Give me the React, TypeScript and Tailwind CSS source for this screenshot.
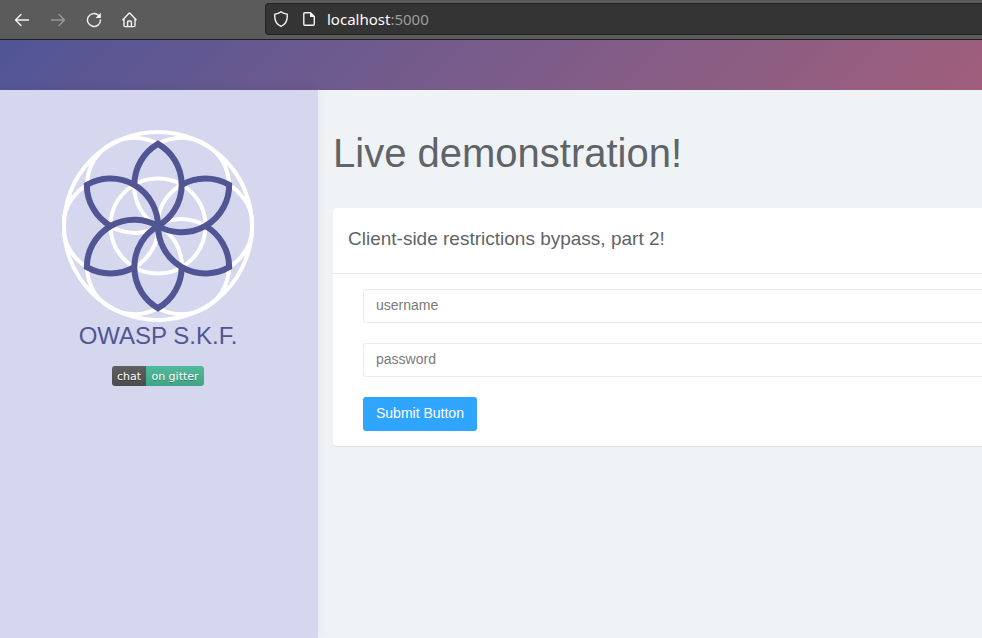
const petals = [0, 60, 120, 180, 240, 300];

function Logo() {
  return (
    <svg viewBox="-96 -96 192 192" className="block size-48" fill="none" role="img" aria-label="OWASP S.K.F. logo">
      <g stroke="#ffffff" strokeWidth="4">
        <circle r="94" />
        <circle r="47.5" />
        {petals.map((angle) => (
          <circle key={angle} cx="47" r="47.5" transform={`rotate(${angle})`} />
        ))}
      </g>
      <g stroke="#515594" strokeWidth="6" strokeLinejoin="miter">
        {petals.map((angle) => (
          <path
            key={angle}
            d="M-23.7 -41.1A47.5 47.5 0 0 1 0 -82.2A47.5 47.5 0 0 1 0 0"
            transform={`rotate(${angle})`}
          />
        ))}
      </g>
    </svg>
  );
}

function BrowserBar() {
  return (
    <div className="flex h-10 shrink-0 items-center border-b border-[#202020] bg-[#5b5b5b] text-[#f4f4f4]">
      <div className="flex w-[265px] shrink-0 items-center gap-5 pl-3.5">
        <button type="button" aria-label="Back">
          <svg viewBox="0 0 16 16" className="size-4" fill="none" stroke="currentColor" strokeWidth="1.4" strokeLinecap="round" strokeLinejoin="round">
            <path d="M14.5 8H1.5M7 2.5L1.5 8L7 13.5" />
          </svg>
        </button>
        <button type="button" aria-label="Forward" className="text-[#989898]" disabled>
          <svg viewBox="0 0 16 16" className="size-4" fill="none" stroke="currentColor" strokeWidth="1.4" strokeLinecap="round" strokeLinejoin="round">
            <path d="M1.5 8H14.5M9 2.5L14.5 8L9 13.5" />
          </svg>
        </button>
        <button type="button" aria-label="Reload">
          <svg viewBox="0 0 16 16" className="size-4" fill="none" stroke="currentColor" strokeWidth="1.4" strokeLinecap="round">
            <path d="M14.5 8A6.5 6.5 0 1 1 12.4 3.2" />
            <path d="M14.8 0.8V6H9.6Z" fill="currentColor" stroke="none" />
          </svg>
        </button>
        <button type="button" aria-label="Home">
          <svg viewBox="0 0 16 16" className="size-4" fill="none" stroke="currentColor" strokeWidth="1.4" strokeLinecap="round" strokeLinejoin="round">
            <path d="M0.9 7.8L7 1.3Q7.5 0.8 8 1.3L14.1 7.8M2 7V13.6Q2 14.6 3 14.6H12Q13 14.6 13 13.6V7M5.6 14.4V10Q5.6 9 6.6 9H8.4Q9.4 9 9.4 10V14.4" />
          </svg>
        </button>
      </div>
      <div className="mb-px flex h-8 min-w-0 flex-1 items-center rounded-l border border-r-0 border-[#222222] bg-[#343434] pl-[7px]">
        <svg viewBox="0 0 16 16" className="size-4 shrink-0" fill="none" stroke="currentColor" strokeWidth="1.4" strokeLinejoin="round">
          <path d="M8 0.8C9.7 2.2 11.8 2.9 14.2 3.1C14.7 8.8 12.8 13.4 8 15.3C3.2 13.4 1.3 8.8 1.8 3.1C4.2 2.9 6.3 2.2 8 0.8Z" />
        </svg>
        <svg viewBox="0 0 16 16" className="ml-3 size-4 shrink-0" fill="none" stroke="currentColor" strokeWidth="1.4" strokeLinejoin="round">
          <path d="M3.8 1.7H9.5L13.3 5.5V13.3Q13.3 14.3 12.3 14.3H3.8Q2.8 14.3 2.8 13.3V2.7Q2.8 1.7 3.8 1.7Z" />
          <path d="M9 1.5V6H13.5Z" fill="currentColor" stroke="none" />
        </svg>
        <div className="ml-2.5 font-['Noto_Sans','Open_Sans',sans-serif] text-[15px] leading-5 text-[#fbfbfb]">
          localhost<span className="text-[#9b9b9b]">:5000</span>
        </div>
      </div>
    </div>
  );
}

export default function App() {
  return (
    <div className="flex min-h-screen flex-col overflow-x-hidden bg-[#eff3f6] font-['Liberation_Sans',Arial,sans-serif] text-[#5f6468]">
      <BrowserBar />
      <header className="h-[50px] shrink-0 bg-linear-135 from-[#505596] to-[#a05e7b]" />
      <div className="flex flex-1">
        <aside className="flex w-[318px] shrink-0 flex-col items-center bg-[#d5d7ee] pt-10 pr-0.5 shadow-[0_0_12px_rgba(0,0,0,0.06)]">
          <Logo />
          <h2 className="text-2xl leading-7 text-[#515594]">OWASP S.K.F.</h2>
          <a
            href="#chat"
            className="mt-4 flex h-5 overflow-hidden rounded-[3px] text-center font-['DejaVu_Sans',Verdana,sans-serif] text-[11px] leading-[22px] text-white text-shadow-[0_1px_0_rgba(1,1,1,0.3)]"
          >
            <span className="w-[34px] bg-linear-to-b from-[#5f5f5f] to-[#4c4c4c]">chat</span>
            <span className="w-[58px] bg-linear-to-b from-[#51ba9a] to-[#41a486]">on gitter</span>
          </a>
        </aside>
        <main className="min-w-0 flex-1 pt-10 pl-[15px]">
          <h1 className="text-[40px] leading-[46px]">Live demonstration!</h1>
          <section className="mt-8 rounded-l bg-white shadow-[0_1px_1px_rgba(0,0,0,0.06)]">
            <h2 className="border-b border-[#e9ecee] px-[15px] pt-5 pb-[23px] text-[19px] leading-[22px]">
              Client-side restrictions bypass, part 2!
            </h2>
            <form className="flex flex-col items-start gap-5 py-[15px] pl-[30px] text-sm" onSubmit={(e) => e.preventDefault()}>
              <input
                type="text"
                aria-label="username"
                placeholder="username"
                className="h-[34px] w-full rounded-l-[3px] border border-r-0 border-[#e9ecee] px-3 pb-0.5 placeholder:text-[#7b7b7b]"
              />
              <input
                type="password"
                aria-label="password"
                placeholder="password"
                className="h-[34px] w-full rounded-l-[3px] border border-r-0 border-[#e9ecee] px-3 pb-0.5 placeholder:text-[#7b7b7b]"
              />
              <button type="submit" className="h-[34px] rounded-[3px] bg-[#30a5ff] px-[13px] pb-0.5 text-white">
                Submit Button
              </button>
            </form>
          </section>
        </main>
      </div>
    </div>
  );
}
